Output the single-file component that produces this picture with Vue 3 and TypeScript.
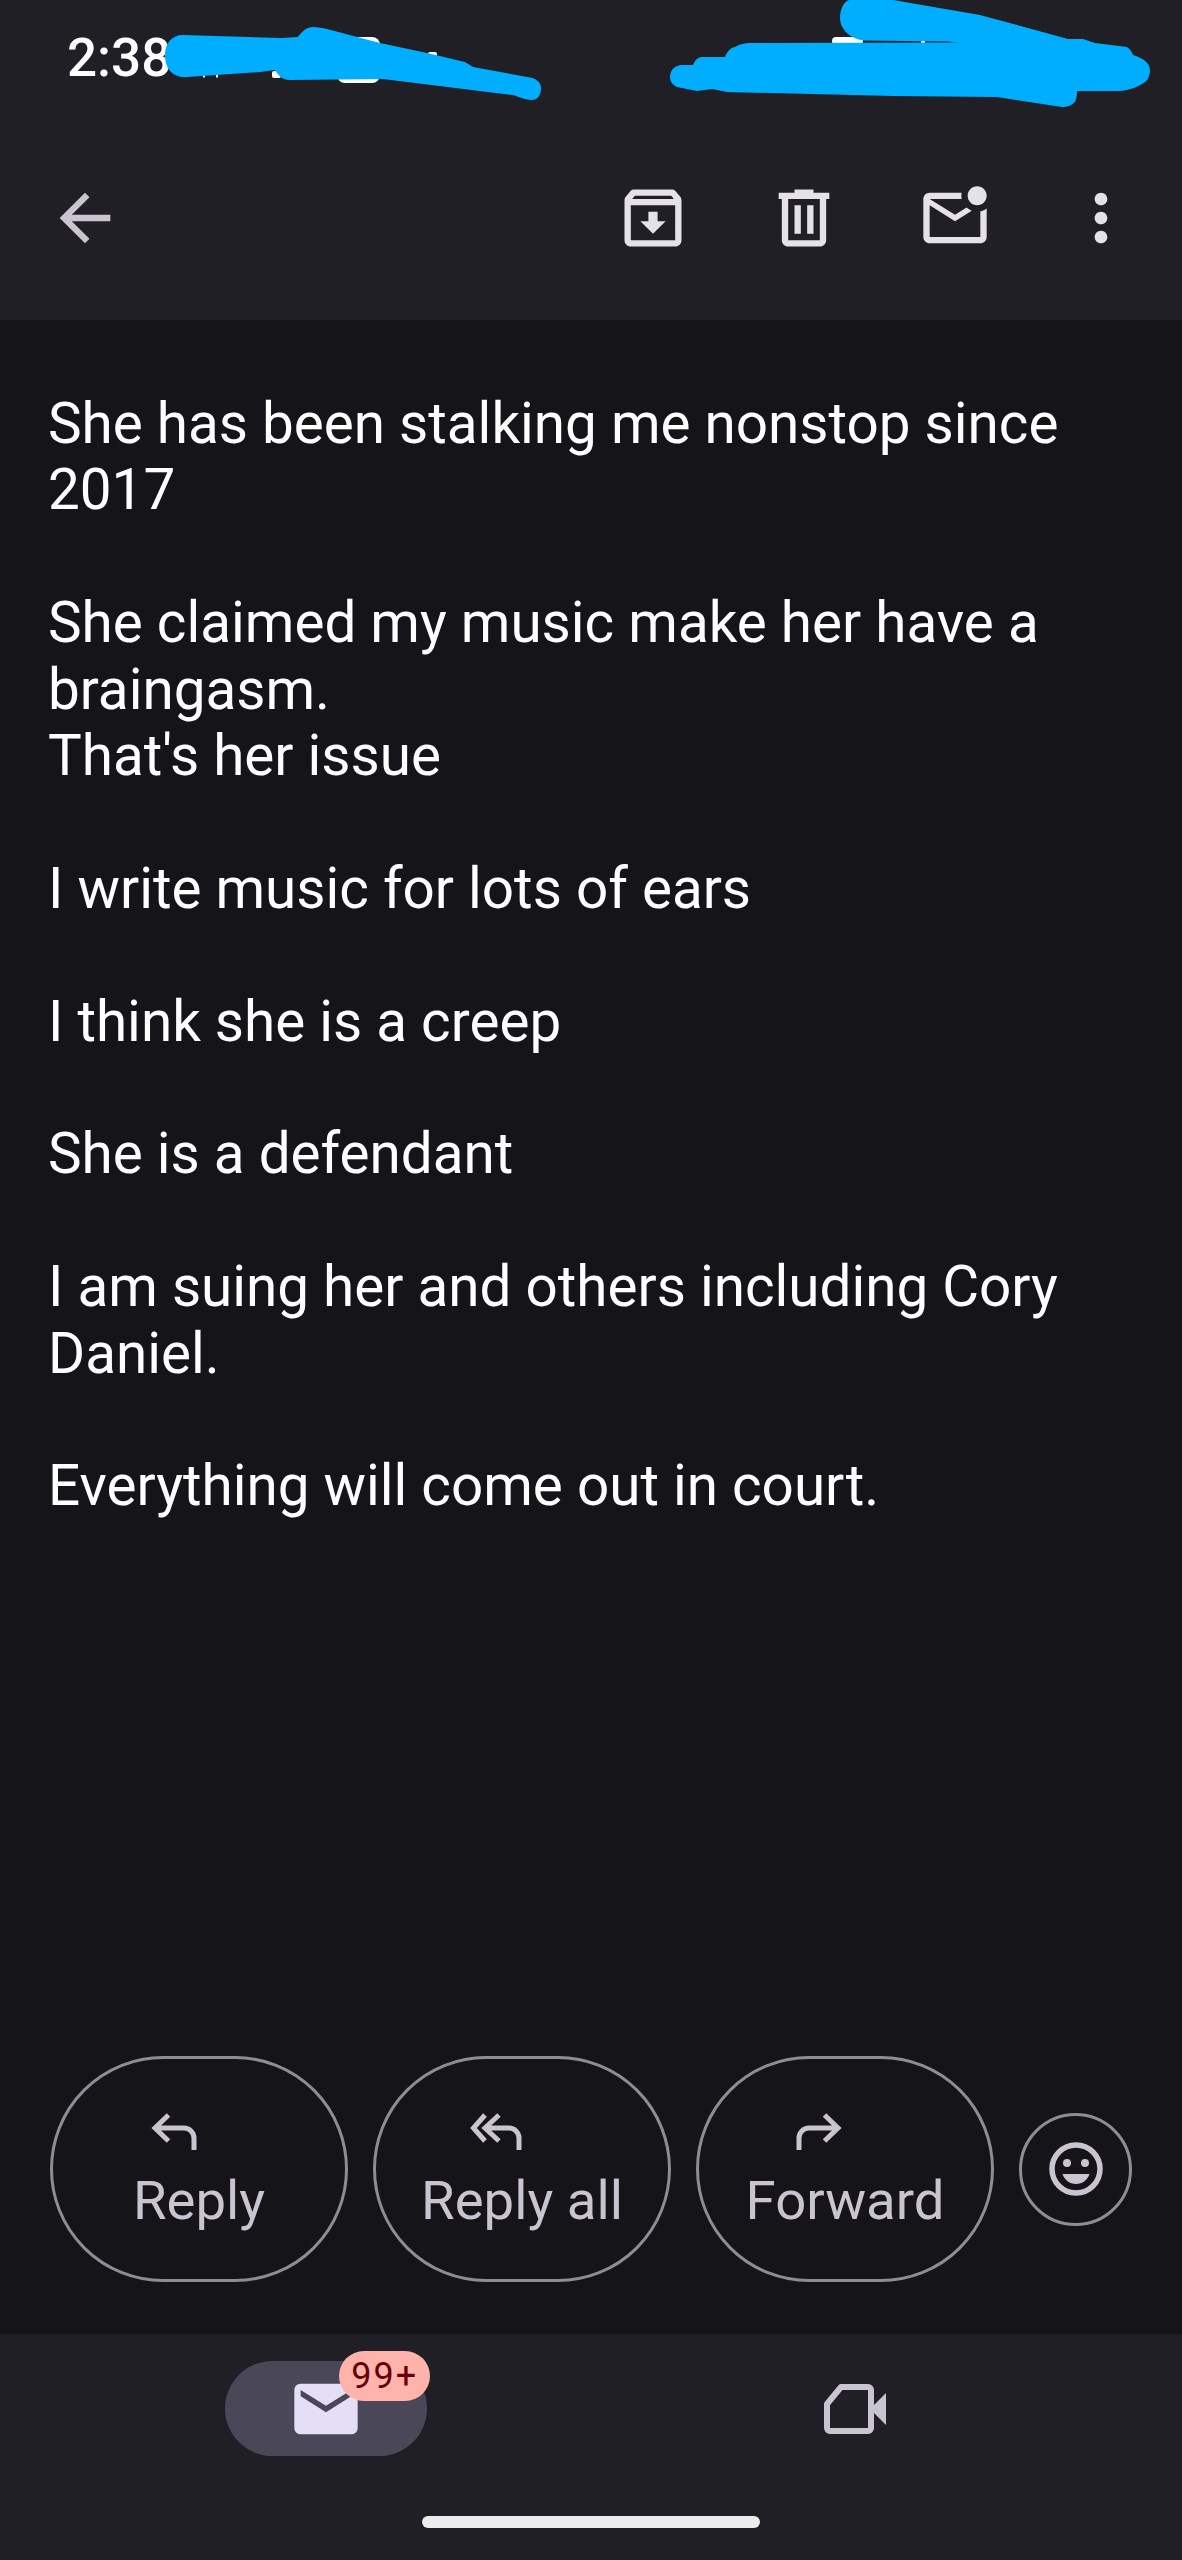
<script setup lang="ts">
const paragraphs: string[][] = [
  ['She has been stalking me nonstop since', '2017'],
  ['She claimed my music make her have a', 'braingasm.', "That's her issue"],
  ['I write music for lots of ears'],
  ['I think she is a creep'],
  ['She is a defendant'],
  ['I am suing her and others including Cory', 'Daniel.'],
  ['Everything will come out in court.'],
]
</script>

<template>
  <div class="screen">
    <header class="top">
      <div class="status"><span class="time">2:38</span></div>
      <div class="toolbar">
        <svg class="icon back" viewBox="0 0 24 24"><path d="M20 11H7.83l5.59-5.59L12 4l-8 8 8 8 1.41-1.41L7.83 13H20v-2z" /></svg>
        <div class="actions">
          <svg class="icon" viewBox="0 0 24 24"><path d="M20.54 5.23l-1.39-1.68C18.88 3.21 18.47 3 18 3H6c-.47 0-.88.21-1.16.55L3.46 5.23C3.17 5.57 3 6.02 3 6.5V19c0 1.1.9 2 2 2h14c1.1 0 2-.9 2-2V6.5c0-.48-.17-.93-.46-1.27zM6.24 5h11.52l.81.97H5.44l.8-.97zM5 19V8h14v11H5zm8.45-9h-2.9v3H8l4 4 4-4h-2.55z" /></svg>
          <svg class="icon" viewBox="0 0 24 24"><path d="M15 4V3H9v1H4v2h1v13c0 1.1.9 2 2 2h10c1.1 0 2-.9 2-2V6h1V4h-5zm2 15H7V6h10v13zM9 8h2v9H9zm4 0h2v9h-2z" /></svg>
          <svg class="icon" viewBox="0 0 24 24"><path d="M22 8.98V18c0 1.1-.9 2-2 2H4c-1.1 0-2-.9-2-2V6c0-1.1.9-2 2-2h10.1c-.06.32-.1.66-.1 1s.04.68.1 1H4l8 5 3.67-2.29c.47.43 1.02.76 1.63.98L12 13 4 8v10h16V9.9c.74-.15 1.42-.48 2-.92zM16 5c0 1.66 1.34 3 3 3s3-1.34 3-3-1.34-3-3-3-3 1.34-3 3z" /></svg>
          <svg class="icon more" viewBox="0 0 24 24"><path d="M12 8c1.1 0 2-.9 2-2s-.9-2-2-2-2 .9-2 2 .9 2 2 2zm0 2c-1.1 0-2 .9-2 2s.9 2 2 2 2-.9 2-2-.9-2-2-2zm0 6c-1.1 0-2 .9-2 2s.9 2 2 2 2-.9 2-2-.9-2-2-2z" /></svg>
        </div>
      </div>
    </header>

    <main class="body">
      <div class="message">
        <p v-for="(lines, i) in paragraphs" :key="i">
          <span v-for="(line, j) in lines" :key="j" class="line">{{ line }}</span>
        </p>
      </div>

      <div class="replies">
        <button class="pill">
          <svg class="glyph" width="47" height="37" viewBox="0 0 47 37"><path d="M18.5 2 5 15l13.500 13M5 15h29a10 10 0 0 1 10 10v12" /></svg>
          <span>Reply</span>
        </button>
        <button class="pill">
          <svg class="glyph" width="52" height="37" viewBox="0 0 52 37"><path d="M15 2 3.500 15 15 28M29 2 15 15l14 13M15 15h24a10 10 0 0 1 10 10v12" /></svg>
          <span>Reply all</span>
        </button>
        <button class="pill">
          <svg class="glyph" width="47" height="37" viewBox="0 0 47 37"><path d="M28.500 2 42 15 28.500 28M42 15H13A10 10 0 0 0 3 25v12" /></svg>
          <span>Forward</span>
        </button>
        <button class="round" aria-label="React">
          <svg width="54" height="54" viewBox="0 0 54 54">
            <circle class="face" cx="27" cy="27" r="24" />
            <circle class="feat" cx="18" cy="21" r="4" />
            <circle class="feat" cx="36" cy="21" r="4" />
            <path class="feat" d="M13.500 32h27c-2 6-7 10-13.500 10S15.500 38 13.500 32z" />
          </svg>
        </button>
      </div>
    </main>

    <nav class="nav">
      <div class="tabs">
        <div class="tab">
          <div class="active">
            <svg class="mail" viewBox="0 0 24 24"><path d="M20 4H4c-1.100 0-2 .9-2 2v12c0 1.100.9 2 2 2h16c1.100 0 2-.9 2-2V6c0-1.100-.9-2-2-2zm0 4l-8 5-8-5V6l8 5 8-5v2z" /></svg>
            <span class="badge">99+</span>
          </div>
        </div>
        <div class="tab">
          <svg class="video" width="62" height="50" viewBox="0 0 62 50">
            <path class="cam" d="M3 20 17 3h27a3 3 0 0 1 3 3v38a3 3 0 0 1-3 3H6a3 3 0 0 1-3-3z" />
            <path class="lens" d="M50 21 62 9v32L50 29z" />
          </svg>
        </div>
      </div>
      <div class="home"></div>
    </nav>

    <svg class="scribble" width="1182" height="110" viewBox="0 0 1182 110">
      <rect class="peek" x="337" y="37" width="43" height="46" rx="8" />
      <rect class="peek" x="272" y="71" width="9" height="7" rx="2" />
      <rect class="peek" x="428" y="52" width="9" height="6" rx="2" />
      <rect class="peek" x="203" y="74" width="2" height="3.500" />
      <rect class="peek" x="216" y="74" width="2" height="3.500" />
      <rect class="peek" x="832" y="37" width="31" height="8" rx="4" />
      <rect class="peek" x="921" y="40" width="4" height="3" />
      <path class="ink" d="M165 55C165 43 172 35 183 35L282 38 298 37C302 31 307 27 313 27 318 27 323 28 327 29L380 43 427 53 465 62 473 67 527 77C536 78 541 82 541 88 541 96 537 100 532 100 525 100 520 97 513 95L383 79 290 80C282 80 278 75 275 70L260 72 187 77C172 78 165 68 165 55Z" />
      <path class="ink" d="M670 77C670 70 675 65 682 65L693 65C695 60 698 57 702 57L725 57C727 51 732 47 735 47 740 44 745 43 750 43L950 42.500 1068 39 1083 39 1095 43 1127 47C1130 49 1132 52 1133 55 1143 58 1150 63 1150 70 1150 79 1145 83 1140 85 1133 89 1125 91 1117 91L1077 91C1077 97 1076 100 1075 102 1071 106 1067 107 1062 107L997 97 893 96 727 92 712 89 697 91 677 87C673 85 670 82 670 77Z" />
      <path class="ink" d="M863 40.500C848 38 840 28 840 18 840 8 845 0 850 0L893 0 980 15 1068 39 1090 60 948 41.500Z" />
    </svg>
  </div>
</template>

<style>
html, body { background: #141419; }
</style>

<style scoped>
.screen {
  position: relative;
  display: flex;
  flex-direction: column;
  width: 1182px;
  height: 2560px;
  overflow: hidden;
  background: #141419;
  font-family: Roboto, "Noto Sans", sans-serif;
}
.top { background: #1f1f25; }
.status {
  height: 116px;
  box-sizing: border-box;
  padding: 27px 0 0 67px;
}
.time {
  color: #fff;
  font-size: 53px;
  font-weight: 500;
  line-height: 62px;
}
.toolbar {
  display: flex;
  align-items: center;
  justify-content: space-between;
  height: 204px;
  padding: 0 43px 0 47px;
}
.icon { width: 76px; height: 76px; fill: #e4e1e9; display: block; }
.back { fill: #c8c5d0; }
.actions { display: flex; gap: 75px; }
.more { margin-left: -5px; }

.body {
  flex: 1;
  display: flex;
  flex-direction: column;
  justify-content: space-between;
  padding: 71px 50px 52px 48px;
  min-height: 0;
}
.message { color: #fff; font-size: 56.6px; line-height: 66.4px; }
.message p { margin: 0 0 66.4px; }
.line { display: block; white-space: nowrap; }

.replies { display: flex; align-items: center; gap: 25px; margin-left: 2px; }
.pill, .round {
  box-sizing: border-box;
  background: transparent;
  border: 3px solid #8e8d93;
  padding: 0;
  color: #c8c5d0;
  font-family: inherit;
}
.pill {
  display: flex;
  flex-direction: column;
  align-items: center;
  width: 298px;
  height: 226px;
  border-radius: 113px;
  padding-top: 54px;
  font-size: 54.5px;
  font-weight: 450;
  line-height: 58px;
}
.pill span { margin-top: 21px; }
.glyph {
  display: block;
  margin-right: 52px;
  fill: none;
  stroke: #c8c5d0;
  stroke-width: 5;
}
.round {
  display: flex;
  align-items: center;
  justify-content: center;
  width: 113px;
  height: 113px;
  border-radius: 50%;
}
.face { fill: none; stroke: #c8c5d0; stroke-width: 5.500; }
.feat { fill: #c8c5d0; }

.nav { background: #1f1f25; height: 226px; box-sizing: border-box; padding-top: 27px; }
.tabs {
  display: grid;
  grid-template-columns: 1fr 1fr;
  padding: 0 63px 0 62px;
  height: 95px;
}
.tab { display: flex; align-items: center; justify-content: center; }
.active {
  position: relative;
  display: flex;
  align-items: center;
  justify-content: center;
  width: 202px;
  height: 95px;
  border-radius: 48px;
  background: #4a4759;
}
.mail { width: 76px; height: 76px; fill: #e4dff7; }
.badge {
  position: absolute;
  left: 114px;
  top: -10px;
  width: 91px;
  height: 50px;
  border-radius: 25px;
  background: #ffb4ab;
  color: #690005;
  font-size: 36px;
  line-height: 50px;
  letter-spacing: 2px;
  text-align: center;
}
.cam { fill: none; stroke: #c8c5d0; stroke-width: 6; stroke-linejoin: round; }
.lens { fill: #c8c5d0; }
.home {
  width: 338px;
  height: 12px;
  margin: 60px auto 0;
  border-radius: 6px;
  background: #ececec;
}
.scribble { position: absolute; left: 0; top: 0; }
.ink { fill: #00aeff; }
.peek { fill: #fff; }
</style>
